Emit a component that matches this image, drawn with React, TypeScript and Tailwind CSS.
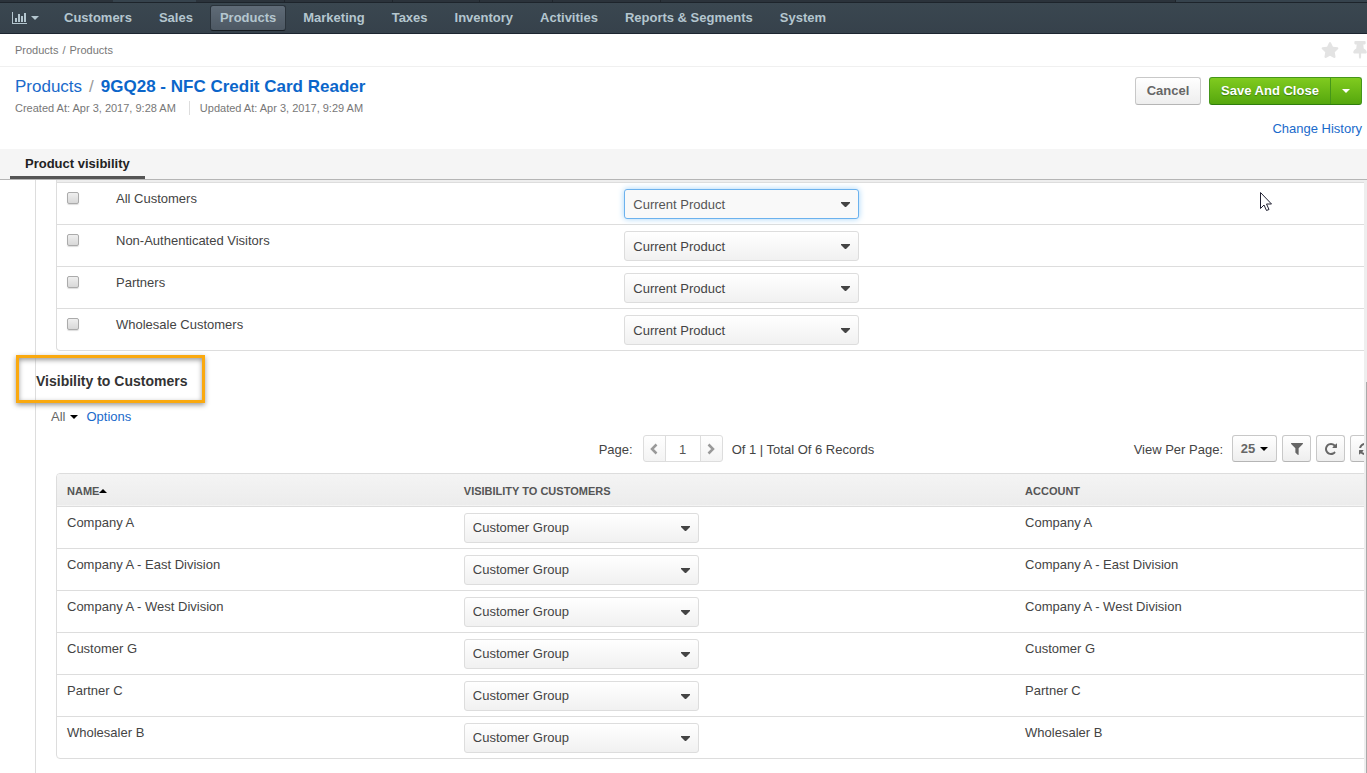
import type { ReactNode } from "react";
import { FaStar, FaThumbtack } from "react-icons/fa";

const navItems = [
  "Customers",
  "Sales",
  "Products",
  "Marketing",
  "Taxes",
  "Inventory",
  "Activities",
  "Reports & Segments",
  "System",
];

const customerGroups = [
  "All Customers",
  "Non-Authenticated Visitors",
  "Partners",
  "Wholesale Customers",
];

const customers = [
  "Company A",
  "Company A - East Division",
  "Company A - West Division",
  "Customer G",
  "Partner C",
  "Wholesaler B",
];

function Caret({ className = "" }: { className?: string }) {
  return (
    <svg viewBox="0 0 8 4" className={`w-2 h-1 fill-current ${className}`} aria-hidden="true">
      <path d="M0 0h8L4 4z" />
    </svg>
  );
}

function BarChartIcon() {
  return (
    <svg viewBox="0 0 15 12" className="w-[15px] h-3 fill-current" aria-hidden="true">
      <path d="M0 0h1v11h14v1H0zM3 6h2v4H3zM6 2h2v8H6zM9 4h2v6H9zM12 1h2v9h-2z" />
    </svg>
  );
}

function ChevronIcon({ className = "" }: { className?: string }) {
  return (
    <svg viewBox="0 0 8 12" className={`w-2 h-3 fill-none stroke-current ${className}`} aria-hidden="true">
      <path d="M6.500 1.500 2 6l4.500 4.500" strokeWidth="2.500" />
    </svg>
  );
}

function FilterIcon() {
  return (
    <svg viewBox="0 256 1408 1408" className="w-3 h-3 fill-current" aria-hidden="true">
      <path d="M1403 295q17 41-14 70l-493 493v742q0 42-39 59-13 5-25 5-27 0-45-19l-256-256q-19-19-19-45v-486l-493-493q-31-29-14-70 17-39 59-39h1280q42 0 59 39z" />
    </svg>
  );
}

function RepeatIcon() {
  return (
    <svg viewBox="0 128 1536 1536" className="w-3 h-3 fill-current" aria-hidden="true">
      <path d="M1536 256v448q0 26-19 45t-45 19h-448q-42 0-59-40-17-39 14-69l138-138q-148-137-349-137-104 0-198.500 40.500t-163.500 109.500-109.500 163.500-40.500 198.500 40.500 198.500 109.500 163.500 163.500 109.500 198.500 40.500q119 0 225-52t179-147q7-10 23-12 15 0 25 9l137 138q9 8 9.500 20.500t-7.500 22.500q-109 132-264 204.500t-327 72.500q-156 0-298-61t-245-164-164-245-61-298 61-298 164-245 245-164 298-61q147 0 284.500 55.500t244.500 156.500l130-129q29-31 70-14 39 17 39 59z" />
    </svg>
  );
}

function RefreshIcon() {
  return (
    <svg viewBox="0 128 1536 1536" className="w-3 h-3 fill-current" aria-hidden="true">
      <path d="M1511 1056q0 5-1 7-64 268-268 434.500t-478 166.500q-146 0-282.500-55t-243.500-157l-129 129q-19 19-45 19t-45-19-19-45v-448q0-26 19-45t45-19h448q26 0 45 19t19 45-19 45l-137 137q71 66 161 102t187 36q134 0 250-65t186-179q11-17 53-117 8-23 30-23h192q13 0 22.500 9.500t9.500 22.500zm25-800v448q0 26-19 45t-45 19h-448q-26 0-45-19t-19-45 19-45l138-138q-148-137-349-137-134 0-250 65t-186 179q-11 17-53 117-8 23-30 23h-199q-13 0-22.500-9.500t-9.500-22.500v-7q65-268 270-434.500t480-166.500q146 0 284 55.500t245 156.500l130-129q19-19 45-19t45 19 19 45z" />
    </svg>
  );
}

interface VisibilitySelectProps {
  label: string;
  value: string;
  active?: boolean;
}

function VisibilitySelect({ label, value, active = false }: VisibilitySelectProps) {
  return (
    <div className="relative w-[235px]">
      <select
        aria-label={label}
        defaultValue={value}
        className={`block w-full h-[30px] appearance-none rounded-[3px] border pt-[1px] pl-2 pr-6 text-[13px] outline-none ${
          active
            ? "border-[#6cb2ee] bg-[#f9f9f9] text-[#555] shadow-[0_0_6px_#a5d4f8]"
            : "border-[#ddd] bg-linear-to-b from-white to-[#f1f1f1] text-[#444]"
        }`}
      >
        <option>{value}</option>
      </select>
      <svg
        viewBox="0 0 9 5"
        className="absolute right-[9px] top-[13px] w-[9px] h-[5px] fill-[#444] pointer-events-none"
        aria-hidden="true"
      >
        <path d="M0 0h9v1L5 5H4L0 1z" />
      </svg>
    </div>
  );
}

function ToolButton({ label, wide, children }: { label: string; wide?: boolean; children: ReactNode }) {
  return (
    <button
      type="button"
      aria-label={label}
      className={`flex items-center h-[27px] rounded-[3px] border border-[#c8c8c8] border-b-[#b5b5b5] bg-linear-to-b from-white to-[#eee] text-[#666] ${
        wide ? "w-[67px] pl-2" : "w-[29px] justify-center"
      }`}
    >
      {children}
    </button>
  );
}

function TopNav() {
  return (
    <header>
      <div className="flex h-[2px] bg-[#2b333b]" aria-hidden="true">
        <div className="w-[113px]" />
        <div className="w-[83px] bg-[#36434d]" />
        <div className="w-[89px] border-r border-[#20262c]" />
        <div className="w-[108px] border-r border-[#20262c]" />
        <div className="w-[87px] border-r border-[#20262c]" />
        <div className="w-[73px] border-r border-[#20262c]" />
        <div className="w-[108px] border-r border-[#20262c]" />
        <div className="flex-1 border-r border-[#20262c]" />
        <div className="w-[14%] bg-[#36434d]" />
      </div>
      <nav className="flex items-center h-8 gap-[7px] border-t border-b border-t-[#1d242b] border-b-[#1d2530] bg-linear-to-b from-[#3a4750] to-[#36414b] pl-3">
        <a href="#dashboard" aria-label="Dashboards" className="flex items-center gap-1 mr-2 text-[#b4c6cf]">
          <BarChartIcon />
          <Caret />
        </a>
        {navItems.map((item) => (
          <a
            key={item}
            href="#menu"
            className={`rounded-[3px] border px-[9px] h-[26px] leading-[24px] text-[13px] font-bold text-[#b4c6cf] whitespace-nowrap ${
              item === "Products"
                ? "border-[#2a333b] border-b-[#171c21] bg-linear-to-b from-[#5f6b77] to-[#4d5863]"
                : "border-transparent"
            }`}
          >
            {item}
          </a>
        ))}
      </nav>
    </header>
  );
}

function PageHeader() {
  return (
    <>
      <div className="flex items-center justify-between h-[33px] border-b border-[#f0f0f0] pl-[15px] text-[11px] text-[#777]">
        <div className="flex gap-1">
          <a href="#products">Products</a>
          <span>/</span>
          <a href="#list">Products</a>
        </div>
        <div className="flex items-center gap-[14px] text-[#e3e3e3]">
          <button type="button" aria-label="Add to favorites">
            <FaStar size={18} />
          </button>
          <button type="button" aria-label="Pin page">
            <FaThumbtack className="w-[14px] h-[18px]" />
          </button>
        </div>
      </div>

      <div className="flex justify-between h-[82px] pl-[15px] pr-[5px] pt-[9px]">
        <div>
          <h1 className="flex gap-[7px] text-[17px] leading-[22px]">
            <a href="#products" className="text-[#1a6acb]">Products</a>
            <span className="text-[#999]">/</span>
            <span className="font-bold text-[#0b66ca]">9GQ28 - NFC Credit Card Reader</span>
          </h1>
          <div className="flex pt-[3px] text-[11px] leading-[14px] text-[#777]">
            <span className="border-r border-[#ddd] pr-[13px]">Created At: Apr 3, 2017, 9:28 AM</span>
            <span className="pl-[10px]">Updated At: Apr 3, 2017, 9:29 AM</span>
          </div>
        </div>
        <div className="flex flex-col items-end">
          <div className="flex gap-2 pt-[1px] text-[13px] font-bold">
            <button
              type="button"
              className="w-[66px] h-7 rounded-[3px] border border-[#c8c8c8] border-b-[#b5b5b5] bg-linear-to-b from-white to-[#eee] text-[#666]"
            >
              Cancel
            </button>
            <div className="flex h-7 rounded-[3px] border border-[#45961a] border-b-[#2f7d0c] bg-linear-to-b from-[#80cb1f] to-[#55a70d] text-white">
              <button type="button" className="w-[120px] [text-shadow:0_1px_1px_#3b7d0a]">
                Save And Close
              </button>
              <button
                type="button"
                aria-label="More save actions"
                className="flex items-center justify-center w-[31px] border-l border-[#45961a]"
              >
                <Caret />
              </button>
            </div>
          </div>
          <a href="#history" className="pt-[14px] text-[13px] leading-5 text-[#1a6acb]">
            Change History
          </a>
        </div>
      </div>

      <div className="flex h-[31px] border-b border-[#b5b5b5] bg-[#f5f5f5] pl-[10px]">
        <a href="#visibility" className="border-b-3 border-[#555] px-[15px] text-[13px] leading-[29px] font-bold text-[#222]">
          Product visibility
        </a>
      </div>
    </>
  );
}

function GroupsTable() {
  return (
    <div className="rounded-b-[4px] border border-t-0 border-[#ddd] overflow-hidden">
      <div className="h-[3px] border-b border-[#ddd] bg-[#eee]" />
      <table className="w-full table-fixed text-left">
        <colgroup>
          <col className="w-[49px]" />
          <col className="w-[37.4%]" />
          <col />
        </colgroup>
        <tbody>
          {customerGroups.map((group, i) => (
            <tr key={group} className="border-b border-[#ddd] last:border-b-0">
              <td className="align-top px-[10px] pt-[9px]">
                <input
                  type="checkbox"
                  aria-label={group}
                  className="block w-3 h-3 appearance-none rounded-[2px] border border-[#ababab] bg-linear-to-b from-[#efefef] to-[#d8d8d8] shadow-[0_1px_1px_#ddd]"
                />
              </td>
              <td className="align-top px-[10px] pt-[6px] leading-5">{group}</td>
              <td className="px-[10px] pt-[6px] pb-[5px]">
                <VisibilitySelect label={`Visibility to ${group}`} value="Current Product" active={i === 0} />
              </td>
            </tr>
          ))}
        </tbody>
      </table>
    </div>
  );
}

function GridToolbar() {
  return (
    <div className="grid grid-cols-[1fr_auto_1fr] items-center mb-[11px]">
      <div />
      <div className="flex items-center">
        <label htmlFor="page" className="pt-[2px] pr-[10px]">Page:</label>
        <div className="flex h-[27px] rounded-[3px] border border-[#ddd] bg-linear-to-b from-white to-[#f3f3f3] text-[#999]">
          <button type="button" aria-label="Previous page" className="flex items-center justify-center w-[21px]">
            <ChevronIcon />
          </button>
          <input
            id="page"
            type="text"
            defaultValue="1"
            className="w-9 border-x border-[#ddd] bg-white pt-[2px] text-center text-[13px] text-[#555] outline-none"
          />
          <button type="button" aria-label="Next page" className="flex items-center justify-center w-[21px]">
            <ChevronIcon className="rotate-180" />
          </button>
        </div>
        <span className="pt-[2px] pl-[9px]">Of 1 | Total Of 6 Records</span>
      </div>
      <div className="flex items-center justify-end">
        <span className="pt-[2px] pr-[9px]">View Per Page:</span>
        <div className="flex gap-[5px]">
          <button
            type="button"
            aria-label="Records per page: 25"
            className="flex items-center justify-center gap-[5px] w-[45px] h-[27px] rounded-[3px] border border-[#c8c8c8] border-b-[#b5b5b5] bg-linear-to-b from-white to-[#eee] font-bold text-[#666]"
          >
            25
            <Caret className="text-black" />
          </button>
          <ToolButton label="Filters"><FilterIcon /></ToolButton>
          <ToolButton label="Refresh"><RepeatIcon /></ToolButton>
          <ToolButton label="Reset" wide><RefreshIcon /></ToolButton>
        </div>
      </div>
    </div>
  );
}

function CustomersTable() {
  return (
    <div className="rounded-[4px] border border-[#ddd] overflow-hidden">
      <table className="w-full table-fixed text-left">
        <colgroup>
          <col className="w-[29.2%]" />
          <col className="w-[41.3%]" />
          <col />
        </colgroup>
        <thead>
          <tr className="h-8 border-b border-[#ddd] bg-linear-to-b from-[#f4f4f4] to-[#ececec] text-[11px] text-[#555]">
            <th className="px-[10px] pt-[2px]">
              <span className="flex items-center">
                NAME
                <Caret className="rotate-180 text-black" />
              </span>
            </th>
            <th className="px-[10px] pt-[2px]">VISIBILITY TO CUSTOMERS</th>
            <th className="px-[10px] pt-[2px]">ACCOUNT</th>
          </tr>
        </thead>
        <tbody>
          {customers.map((customer) => (
            <tr key={customer} className="border-b border-[#ddd] last:border-b-0">
              <td className="align-top px-[10px] pt-[6px] leading-5">{customer}</td>
              <td className="px-[10px] pt-[6px] pb-[5px]">
                <VisibilitySelect label={`Visibility to ${customer}`} value="Customer Group" />
              </td>
              <td className="align-top px-[10px] pt-[6px] leading-5">{customer}</td>
            </tr>
          ))}
        </tbody>
      </table>
    </div>
  );
}

export default function App() {
  return (
    <div className="flex flex-col min-h-screen bg-white font-['Liberation_Sans',Arial,sans-serif] text-[13px] leading-5 text-[#444]">
      <TopNav />
      <PageHeader />
      <div className="flex flex-1">
        <main className="relative flex-1 min-w-0 overflow-hidden pl-[35px]">
          <div className="h-full border-l border-[#ddd] pb-[14px]">
            <div className="ml-5 -mr-[53px]">
              <GroupsTable />
            </div>
            {/* highlighted section title */}
            <div className="relative w-fit mt-[15px] h-10 leading-[30px]">
              <h2 className="text-[14px] font-bold text-[#333]">Visibility to Customers</h2>
              <div className="absolute -left-5 -right-[18px] -top-[11px] h-[48px] border-3 border-[#faa90f] shadow-[0_2px_5px_#999,inset_0_2px_5px_#999]" />
            </div>
            <div className="flex items-center mb-2 pt-[1px] pl-[15px]">
              <button type="button" className="flex items-center gap-[5px] pr-2 text-[#666]">
                All
                <Caret className="text-black" />
              </button>
              <a href="#options" className="text-[#1a6acb]">Options</a>
            </div>
            <div className="ml-5 -mr-[53px]">
              <GridToolbar />
              <CustomersTable />
            </div>
          </div>
          <svg
            viewBox="0 0 12 19"
            className="absolute left-[1260px] top-3 w-3 h-[19px] fill-white stroke-[#223]"
            aria-hidden="true"
          >
            <path d="M.5.500v16l3.500-3.500 2.500 5.500 2.500-1-2.500-5.500h5z" />
          </svg>
        </main>
        <div className="flex flex-col w-[3px] bg-[#eee]" aria-hidden="true">
          <div className="mt-[202px] flex-1 border-r border-[#aaa]" />
        </div>
      </div>
    </div>
  );
}
